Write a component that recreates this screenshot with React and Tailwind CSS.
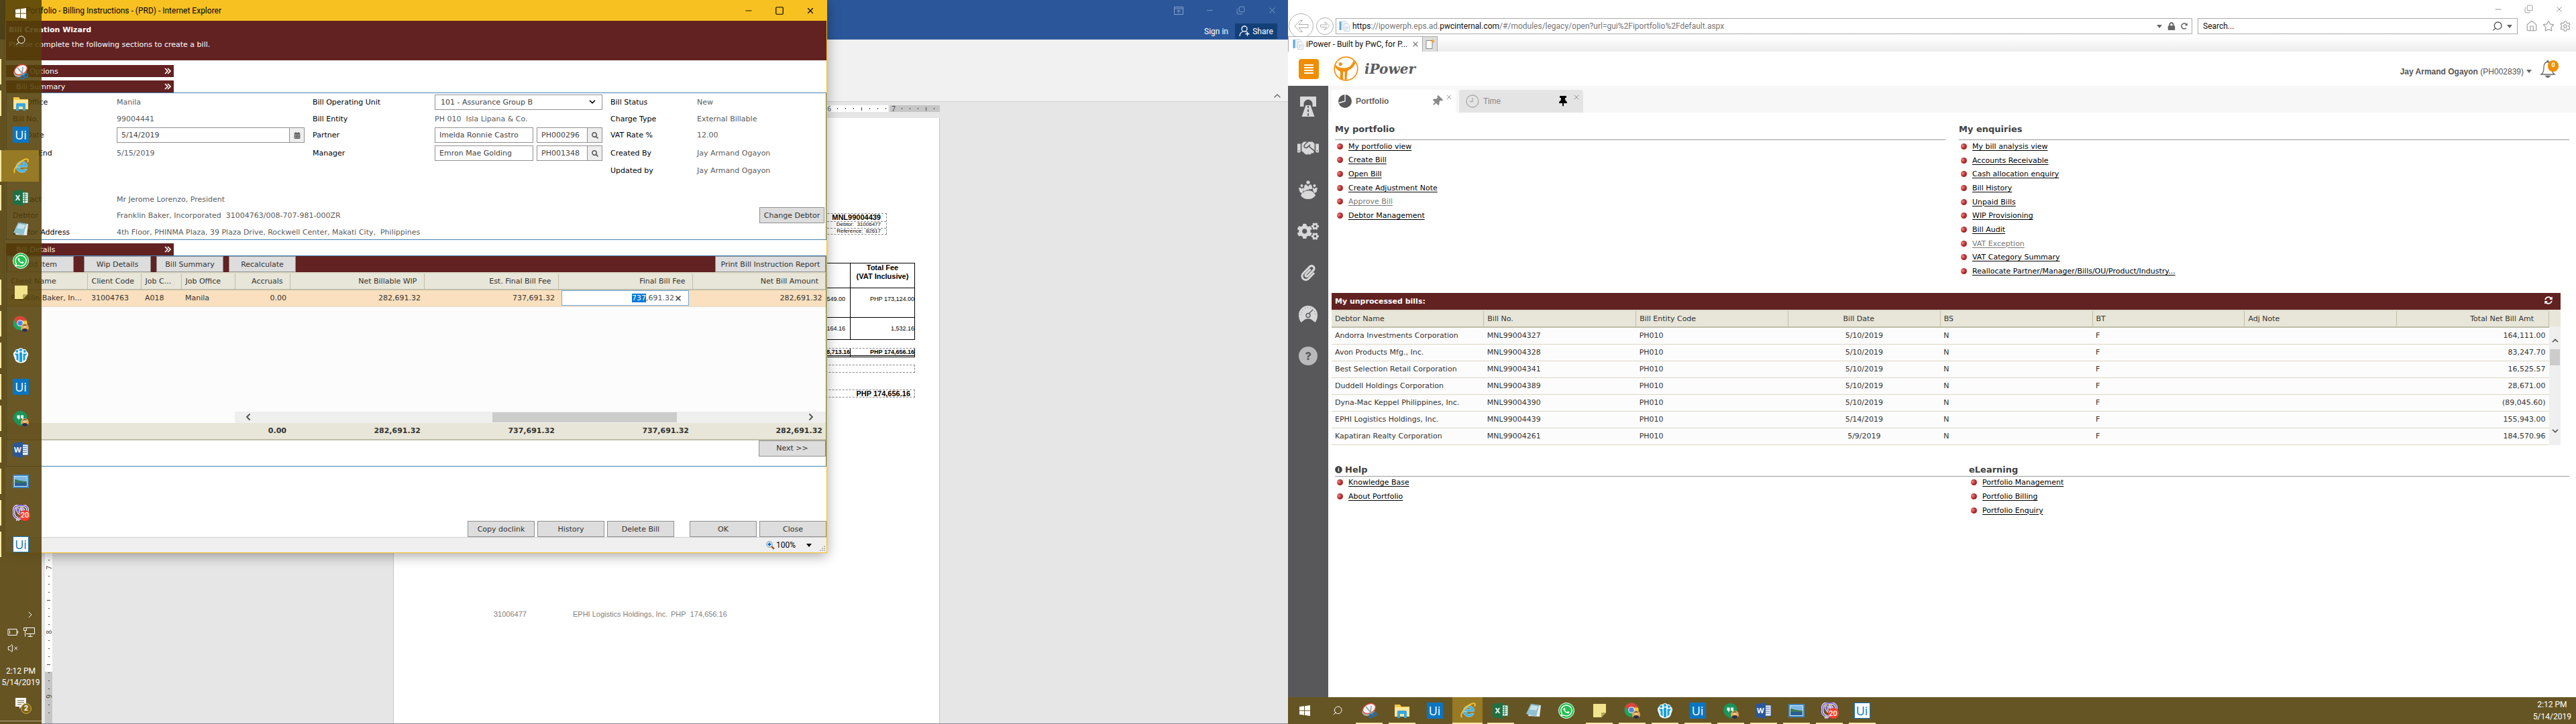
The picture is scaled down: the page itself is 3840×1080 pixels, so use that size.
import React, { useEffect, useRef } from "react";
import {
  FaCalendarAlt, FaCogs, FaHandshake, FaInfoCircle, FaLock, FaPaperclip, FaQuestion,
  FaSearch, FaSyncAlt, FaThumbtack, FaViber, FaWhatsapp, FaRedoAlt,
} from "react-icons/fa";
import {
  ChevronDown, ChevronLeft, ChevronRight, ChevronUp, Home, Search, Settings, Star,
  Minus, Square, Copy, X, VolumeX,
} from "lucide-react";

const SANS = "font-['DejaVu_Sans',Verdana,sans-serif]";
const UI = "font-[Roboto,'Open_Sans',sans-serif]";
const ARIAL = "font-['Liberation_Sans',Arial,sans-serif]";

/* ---------- taskbar icons ---------- */

const Svg = ({ children, className = "size-6" }) => (
  <svg viewBox="0 0 24 24" className={className} aria-hidden="true">{children}</svg>
);

const StartIcon = () => (
  <Svg className="h-4 w-4">
    <path fill="#fff" d="M0 3.4 10.5 2v9.3H0zM12 1.8 24 0v11.3H12zM0 12.7h10.5V22L0 20.6zM12 12.7h12V24l-12-1.8z" />
  </Svg>
);
const SnipIcon = () => (
  <Svg>
    <ellipse cx="11" cy="12" rx="10" ry="7.5" fill="#b9a9a2" transform="rotate(-25 11 12)" />
    <ellipse cx="12" cy="9" rx="10" ry="6.8" fill="#f4f4f4" stroke="#d9463c" strokeWidth="1.4" transform="rotate(-25 12 9)" />
    <path d="m7 6 10 12M15 5l-1 12" stroke="#8f9aa3" strokeWidth="1.6" />
    <circle cx="14.5" cy="20" r="2.4" fill="none" stroke="#1c75bc" strokeWidth="1.8" />
    <circle cx="20" cy="17.5" r="2.4" fill="none" stroke="#1c75bc" strokeWidth="1.8" />
  </Svg>
);
const FolderIcon = () => (
  <Svg>
    <path fill="#f5c84c" d="M1 3h8l2 3h12v15H1z" />
    <path fill="#ffe699" d="M1 7h22v14H1z" />
    <path fill="#3aa7e0" d="M5 13.5c0-1 .8-1.5 1.8-1.5h10.4c1 0 1.8.5 1.8 1.5V23h-4v-6H9v6H5z" />
  </Svg>
);
const UiIcon = ({ light }) => (
  <span className={`flex size-6 items-center justify-center border text-[18px] leading-6 font-['Open_Sans',sans-serif] ${light ? "border-[#0a75c2] bg-white text-[#0a75c2]" : "border-[#0a75c2] bg-[#0a75c2] text-white"}`}>Ui</span>
);
const IeIcon = ({ className }) => (
  <Svg className={className}>
    <path d="M6 13.2h15.5c.4-5-3-8.7-8-8.7-4.8 0-8.3 3.6-8.3 8.3 0 5 3.7 8.4 8.5 8.4 3.6 0 6.4-1.7 7.5-5h-4.6c-.6 1-1.6 1.5-2.9 1.5-2.2 0-3.700-1.500-3.800-4.500zm4-3.200c.3-1.700 1.600-2.700 3.400-2.700s3.100 1 3.300 2.700z" fill="#3fb4ee" stroke="#d9f1fd" strokeWidth=".5" />
    <path d="M3.200 22c-3-2.500 1-10 7-15.300C15.500 2 21.500-.2 22.600 2c.6 1.200.3 2.500-.4 4" fill="none" stroke="#f7c12f" strokeWidth="1.9" />
  </Svg>
);
const OfficeIcon = ({ letter, sheet }) => (
  <Svg>
    <path fill="#fff" stroke={sheet ? "#1e7145" : "#2b579a"} d="M13 4h10v16H13z" />
    <path d="M14 7h7.5M14 10h7.5M14 13h7.5M14 16h7.5" stroke={sheet ? "#1e7145" : "#2b579a"} strokeWidth="1.2" />
    {sheet && <path d="M18 5v14" stroke="#1e7145" />}
    <path fill={sheet ? "#1e7145" : "#2b579a"} d="M0 2.5 15 0v24L0 21.5z" />
    <text x="7.3" y="16" fontSize="11" fontWeight="700" fill="#fff" textAnchor="middle" fontFamily="Open Sans, sans-serif">{letter}</text>
  </Svg>
);
const NotepadIcon = () => (
  <Svg>
    <path fill="#e9eef0" d="m9 2 14 2-2 17-17-1z" />
    <path fill="#8fc3cf" d="m8 2 12.5 2L16 21 1 17z" />
    <path fill="#c4e4ea" d="m9 4 10 1.5-3 6-10-1z" />
    <path d="m8 2 13 2" stroke="#5d7f89" strokeWidth="1.5" strokeDasharray="1 1" />
  </Svg>
);
const StickyIcon = () => (
  <Svg>
    <path fill="#f2e48c" d="M3 2h19v13l-7 7H3z" />
    <path fill="#b5a75e" d="M22 15h-7v7z" />
  </Svg>
);
const Avatar = () => (
  <g>
    <circle cx="18" cy="18" r="6" fill="#e7a64b" />
    <circle cx="18" cy="16" r="2.6" fill="#e9c4a4" />
    <path d="M15.400 15.500c0-3 5.200-3 5.200 0-1-1.200-4-1.200-5.200 0z" fill="#2b211c" />
    <path d="M13.500 22c.5-4 8.500-4 9 0a6 6 0 0 1-9 0z" fill="#28304e" />
  </g>
);
const ChromeIcon = () => (
  <Svg>
    <circle cx="11" cy="11" r="10.5" fill="#1fa463" />
    <path d="M2 5.500A10.500 10.500 0 0 1 21 8H11l-4.500 5z" fill="#d9453a" />
    <path d="M11 7.500h10a10.500 10.500 0 0 1-9 14l4-9z" fill="#fbc633" />
    <circle cx="11" cy="11" r="4.8" fill="#fff" />
    <circle cx="11" cy="11" r="3.8" fill="#4a86e8" />
    <Avatar />
  </Svg>
);
const PeopleIcon = () => (
  <Svg>
    <path d="M12 1c2 0 3 1 3.500 2 2.500-1 5 .5 5 3 2 1 3 3 2.500 5.500L20 20c-2 2-4 3.500-8 3.500S6 22 4 20L1 11.500C.500 9 1.500 7 3.500 6c0-2.500 2.500-4 5-3C9 2 10 1 12 1z" fill="#f3fbff" />
    <g fill="#16a0dc">
      <circle cx="12" cy="4.2" r="2.1" /><circle cx="6.3" cy="6" r="1.9" /><circle cx="17.7" cy="6" r="1.9" />
      <path d="M10 7.500h4V22h-4zM2.500 9.500H8.500V20.500L5.500 18.500V13zM21.500 9.500H15.500V20.500L18.500 18.500V13z" />
    </g>
  </Svg>
);
const HangoutsIcon = () => (
  <Svg>
    <path d="M11 1a10 10 0 1 1 1 20v3c-4-2-11-6-11-13A10 10 0 0 1 11 1z" fill="#17975a" />
    <path d="M6.500 7.500h4v4.500l-2 3v-3h-2zM12 7.500h4v4.500l-2 3v-3h-2z" fill="#fff" />
    <Avatar />
  </Svg>
);
const PhotoIcon = () => (
  <Svg>
    <path fill="#3b87c8" d="M0 2h24v20H0z" />
    <path fill="#cfe8f8" d="M2 4h20v16H2z" />
    <path fill="#7db9e4" d="M3 5h18v7H3z" />
    <path fill="#3d7a5a" d="M3 9c6 1 10 3 18 3v2H3z" />
    <path fill="#2a5f94" d="M3 14h18v5H3z" />
  </Svg>
);
const ViberIcon = () => (
  <span className="relative block size-6">
    <FaViber className="size-6 stroke-white stroke-[40px] text-[#7d5be0] [paint-order:stroke]" />
    <span className={`absolute top-2 left-2.5 flex size-4 items-center justify-center rounded-full bg-[#ff3b30] text-[11px] leading-none font-medium text-white ${UI}`}>20</span>
  </span>
);

const APPS = [
  { name: "Snipping Tool", icon: <SnipIcon />, open: true },
  { name: "File Explorer", icon: <FolderIcon />, open: true },
  { name: "UiPath", icon: <UiIcon /> },
  { name: "Internet Explorer", icon: <IeIcon className="size-6" />, active: true },
  { name: "Excel", icon: <OfficeIcon letter="X" sheet />, open: true },
  { name: "Notepad", icon: <NotepadIcon /> },
  { name: "WhatsApp", icon: <span className="flex size-6 items-center justify-center rounded-full border border-white bg-[#25c04f]"><FaWhatsapp className="size-5 text-white" /></span> },
  { name: "Sticky Notes", icon: <StickyIcon />, open: true },
  { name: "Chrome", icon: <ChromeIcon />, open: true },
  { name: "People", icon: <PeopleIcon />, open: true },
  { name: "UiPath Studio", icon: <UiIcon />, open: true },
  { name: "Hangouts", icon: <HangoutsIcon />, open: true },
  { name: "Word", icon: <OfficeIcon letter="W" />, open: true },
  { name: "Photos", icon: <PhotoIcon />, open: true },
  { name: "Viber", icon: <ViberIcon />, open: true },
  { name: "UiPath Robot", icon: <UiIcon light />, open: true },
];

function SideTaskbar() {
  return (
    <nav aria-label="Taskbar" className={`absolute inset-y-0 left-0 z-20 flex w-[62px] flex-col bg-[#544008]/88 text-white ${UI}`}>
      <button aria-label="Start" className="flex h-10 items-center justify-center"><StartIcon /></button>
      <button aria-label="Search" className="mb-[3px] flex h-10 items-center justify-center"><Search className="size-4 -scale-x-100" strokeWidth={1.5} /></button>
      {APPS.map((a) => (
        <button key={a.name} aria-label={a.name} className={`flex h-[47px] items-center border-r-4 border-transparent ${a.active ? "bg-[#967a25] bg-clip-padding" : ""}`}>
          <span className={`w-0.5 ${a.active ? "h-full bg-[#fce8a8]" : a.open ? "h-[38px] bg-[#fce8a8]" : ""}`} />
          <span className="flex flex-1 justify-center pl-0.5">{a.icon}</span>
        </button>
      ))}
      <div className="mt-auto flex flex-col items-center pb-1">
        <button aria-label="Show hidden icons" className="mb-2.5 ml-7"><ChevronRight className="size-4" strokeWidth={1.5} /></button>
        <div className="flex gap-2">
          <svg viewBox="0 0 16 12" className="h-4 w-4" fill="none" stroke="#fff" aria-label="Battery"><path d="M1 1.500h13v9H1zM15.500 4v4M3.500 3.500v5" /></svg>
          <svg viewBox="0 0 17 16" className="h-4 w-[17px]" fill="none" stroke="#fff" aria-label="Network"><path d="M4 1.500h12.500v9H4M10 11v3.500M6.500 14.500h7M.5 1.500h4v4h-4zM2.500 5.500v9" /></svg>
        </div>
        <VolumeX className="mt-2 mr-6 size-4" strokeWidth={1.5} aria-label="Muted" />
        <div className="mt-[18px] text-center text-xs leading-[17px]">2:12 PM<br />5/14/2019</div>
        <button aria-label="Notifications" className="relative mt-3.5 mb-[18px]">
          <svg viewBox="0 0 16 16" className="size-4"><path fill="#fff" d="M0 0h16v13H9l-3 3v-3H0z" /><path d="M3 4h10M3 7h10M3 10h6" stroke="#665524" /></svg>
          <span className="absolute top-2 left-2 flex size-4 items-center justify-center rounded-full border border-[#c4b070] bg-[#85660c] text-[11px] font-bold">2</span>
        </button>
        <div className="h-px w-full bg-[#b3a888]" />
      </div>
    </nav>
  );
}

function BottomTaskbar() {
  return (
    <nav aria-label="Taskbar" className={`flex h-10 bg-[#665524] pr-[7px] text-white ${UI}`}>
      <button aria-label="Start" className="flex w-[49px] items-center justify-center"><StartIcon /></button>
      <button aria-label="Search" className="flex w-[49px] items-center justify-center"><Search className="size-4 -scale-x-100" strokeWidth={1.5} /></button>
      {APPS.map((a) => (
        <button key={a.name} aria-label={a.name} className={`flex w-[49px] flex-col items-center border-r-4 border-transparent ${a.active ? "bg-[#967a25] bg-clip-padding" : ""}`}>
          <span className="flex flex-1 items-center pt-0.5">{a.icon}</span>
          <span className={`h-0.5 ${a.active ? "w-full bg-[#fce8a8]" : a.open ? "w-10 bg-[#fce8a8]" : ""}`} />
        </button>
      ))}
      <div className="ml-auto pt-0.5 text-center text-xs leading-[18px]">2:12 PM<br />5/14/2019</div>
    </nav>
  );
}

/* ---------- Word ---------- */

function Marks({ count, vertical }) {
  return Array.from({ length: count }, (_, k) => {
    const i = k + 1;
    return (
      <span key={i} className={`flex shrink-0 items-center justify-center text-[10px] leading-none ${vertical ? "h-3 w-full" : "h-full w-3"}`}>
        {i % 8 === 0 ? <span className={vertical ? "-rotate-90" : ""}>{i / 8}</span>
          : i % 8 === 4 ? <span className={`bg-[#444] ${vertical ? "h-px w-[5px]" : "h-[5px] w-px"}`} />
          : <span className={`bg-[#444] ${vertical ? "h-px w-0.5" : "h-0.5 w-px"}`} />}
      </span>
    );
  });
}

function WordDocument() {
  const dash = "border-dashed border-[#888]";
  return (
    <article className={`flex flex-1 flex-col border-x border-[#c6c6c6] bg-white pr-9 text-black ${ARIAL}`}>
      <div className={`mt-[142px] mr-[42px] ml-auto w-[300px] border text-right leading-none ${dash}`}>
        <div className={`h-3 border-b pr-2 text-[11px] font-bold ${dash}`}>MNL99004439</div>
        <div className={`h-[10px] border-b pr-2 text-[8px] ${dash}`}>Debtor:&nbsp; 31006477</div>
        <div className="h-2 pr-2 text-[8px]">Reference:&nbsp; 82617</div>
      </div>
      <table className="mt-[42px] ml-auto w-[600px] table-fixed border-collapse text-right text-[9px] leading-3 [&_td]:border [&_td]:border-black [&_th]:border [&_th]:border-black">
        <colgroup><col /><col className="w-24" /></colgroup>
        <thead>
          <tr className="h-[37px] align-top text-[11px] leading-[13px]"><th /><th className="text-center">Total Fee<br />(VAT Inclusive)</th></tr>
        </thead>
        <tbody>
          <tr className="h-11 align-middle"><td className="pt-0 pr-[7px] pb-3">18,549.00</td><td className="pb-3">PHP 173,124.00</td></tr>
          <tr className="h-[33px]"><td className="pr-[7px]">164.16</td><td>1,532.16</td></tr>
        </tbody>
      </table>
      <div className="mt-3 ml-auto flex w-[600px] justify-end border-t border-dashed border-t-[#888] text-right text-[9px] leading-[10px] font-bold">
        <div className="flex-1 border-r border-b-[3px] border-double border-black">18,713.16</div>
        <div className="w-24 border-r border-b-[3px] border-double border-black">PHP 174,656.16</div>
      </div>
      <div className={`mt-[11px] ml-auto h-3 w-[600px] border ${dash}`} />
      <div className={`mt-[25px] ml-auto h-3 w-[600px] border pr-1.5 text-right text-[11px] leading-[11px] font-bold ${dash}`}>PHP 174,656.16</div>
      <footer className="mt-[315px] flex pl-[149px] text-[11px] leading-4 text-[#7f7f7f]">
        <span className="w-[118px]">31006477</span>
        <span className="w-[146px]">EPHI Logistics Holdings, Inc.</span>
        <span>PHP&nbsp; 174,656.16</span>
      </footer>
    </article>
  );
}

function WordWindow() {
  return (
    <section aria-label="Word" className="flex flex-1 flex-col border-b border-[#8a8a96] bg-[#e6e6e6]">
      <header className={`flex h-[59px] flex-col items-end bg-[#2b579a] text-xs text-white ${UI}`}>
        <div className="flex h-[31px] items-center gap-[33px] pr-4 text-[#88a3cb]">
          <button aria-label="Ribbon display options"><svg viewBox="0 0 14 12" className="h-3 w-3.5" fill="none" stroke="currentColor"><path d="M.5.5h13v11H.5zM.5 3h13M7 10V5M4.500 7.200 7 5l2.500 2.200" /></svg></button>
          <button aria-label="Minimize"><Minus className="size-[13px]" strokeWidth={1.5} /></button>
          <button aria-label="Restore"><Copy className="size-[13px] -scale-y-100" strokeWidth={1.5} /></button>
          <button aria-label="Close"><X className="size-[15px]" strokeWidth={1.5} /></button>
        </div>
        <div className="flex items-center gap-2.5 pt-1 pr-4">
          <button>Sign in</button>
          <button className="flex h-[23px] w-[63px] items-center justify-center gap-1 bg-[#124078]">
            <svg viewBox="0 0 16 17" className="h-[17px] w-4" fill="none" stroke="#fff" strokeWidth="1.3"><circle cx="8" cy="5" r="4" /><path d="M1 16c0-4 2-6 5-7M10 9l1.500 1M12.500 9.500v6M9.500 12.500h6" /></svg>
            Share
          </button>
        </div>
      </header>
      <div className="flex h-[93px] items-end justify-end border-b border-[#d2d2d2] bg-[#f1f1f1] pr-2">
        <button aria-label="Collapse ribbon"><ChevronUp className="size-4 text-[#666]" /></button>
      </div>
      <div className="flex flex-1 pl-[67px]">
        <div className="flex w-[11px] flex-col bg-[linear-gradient(to_top,#c6c6c6_77px,#fff_77px)] pt-[29px] text-[#444]"><Marks count={74} vertical /></div>
        <div className="ml-[508px] flex w-[815px] flex-col">
          <div className="mt-[5px] mb-[9px] flex h-2.5 bg-[linear-gradient(to_left,#c6c6c6_75px,#e6e6e6_75px,#e6e6e6_77px,#fff_77px)] pl-20 text-[#444]"><Marks count={61} /></div>
          <WordDocument />
        </div>
      </div>
    </section>
  );
}

/* ---------- Billing window ---------- */

const Btn = ({ children, className = "w-[100px]" }) => (
  <button className={`h-6 border border-[#909090] bg-[#ddd] text-[11px] leading-none text-[#333] ${className}`}>{children}</button>
);

const SectionBar = ({ children, className = "" }) => (
  <button className={`flex h-[18px] w-[250px] items-center justify-between bg-[#612221] pr-1 pl-[15px] text-[11px] text-white ${className}`}>
    {children}
    <svg viewBox="0 0 10 10" className="size-2.5" fill="none" stroke="#fff" strokeWidth="1.6" aria-hidden="true"><path d="m1 1 4 4-4 4M5 1l4 4-4 4" /></svg>
  </button>
);

function Lookup({ name, code, label }) {
  return (
    <span className="flex w-[250px] gap-[5px]">
      <input aria-label={`${label} name`} defaultValue={name} className="h-[23px] w-[147px] border border-[#909090] bg-white px-1.5 text-[#444]" />
      <span className="flex h-[23px] flex-1 border border-[#909090]">
        <input aria-label={`${label} code`} defaultValue={code} className="w-0 flex-1 bg-white px-1.5 text-[#444]" />
        <button aria-label={`Find ${label}`} className="flex w-[22px] items-center justify-center border-l border-[#909090] bg-[#eee]"><FaSearch className="size-2.5 text-[#555]" /></button>
      </span>
    </span>
  );
}

const GRID_COLS = ["w-[120px]", "w-20", "w-[60px]", "w-20", "w-[82px]", "w-[200px]", "w-[200px]", "w-[200px]", ""];
const GRID_HEAD = ["Client Name", "Client Code", "Job C...", "Job Office", "Accruals", "Net Billable WIP", "Est. Final Bill Fee", "Final Bill Fee", "Net Bill Amount"];

function BillTable() {
  const fee = useRef(null);
  useEffect(() => {
    fee.current.focus();
    fee.current.setSelectionRange(0, 3);
  }, []);
  return (
    <div className="flex flex-col bg-[#fcfcfc] text-[#333]">
      <table className="w-full table-fixed border-collapse text-left text-[11px] leading-none">
        <colgroup>{GRID_COLS.map((c, i) => <col key={i} className={c} />)}</colgroup>
        <thead>
          <tr className="h-[25px] border-t-2 border-b-2 border-t-[#dedbc9] border-b-[#c0bda9] bg-[#e8e6d8]">
            {GRID_HEAD.map((h, i) => <th key={h} className={`border-r border-[#c0bda9] font-normal whitespace-nowrap ${i > 3 ? "pr-2.5 text-right" : "pl-1.5"}`}>{h}</th>)}
          </tr>
        </thead>
        <tbody>
          <tr className="h-[25px] border-b border-[#dedbd0] bg-[#fae0be]">
            <td className="pl-1.5 whitespace-nowrap">Franklin Baker, In...</td>
            <td className="pl-1.5">31004763</td>
            <td className="pl-1.5">A018</td>
            <td className="pl-1.5">Manila</td>
            <td className="pr-[5px] text-right">0.00</td>
            <td className="pr-[5px] text-right">282,691.32</td>
            <td className="pr-[5px] text-right">737,691.32</td>
            <td className="px-[5px]">
              <span className="flex h-[23px] items-center border border-[#6aa9e0] bg-white pr-[9px]">
                <input ref={fee} aria-label="Final Bill Fee" defaultValue="737,691.32" className="w-0 flex-1 text-right text-[#555] outline-none selection:bg-[#0078d7] selection:text-white" />
                <button aria-label="Clear"><X className="size-3 text-[#333]" strokeWidth={3} /></button>
              </span>
            </td>
            <td className="pr-[5px] text-right">282,691.32</td>
          </tr>
        </tbody>
      </table>
      <div className="mt-[156px] ml-[340px] flex h-[17px] items-center bg-[#efefef]">
        <button aria-label="Scroll left" className="px-3"><ChevronLeft className="size-4 text-[#555]" strokeWidth={3} /></button>
        <div className="mr-[192px] ml-auto h-[15px] w-[275px] bg-[#ccc]" />
        <button aria-label="Scroll right" className="pr-3.5"><ChevronRight className="size-4 text-[#555]" strokeWidth={3} /></button>
      </div>
      <table className="w-full table-fixed border-collapse text-right text-[11px] leading-none">
        <colgroup>{GRID_COLS.map((c, i) => <col key={i} className={c} />)}</colgroup>
        <tbody>
          <tr className="h-[25px] border-b-2 border-[#c0bda9] bg-[#e8e6d8] font-bold">
            <td /><td /><td /><td />
            {["0.00", "282,691.32", "737,691.32", "737,691.32", "282,691.32"].map((v, i) => <td key={i} className="pr-[5px]">{v}</td>)}
          </tr>
        </tbody>
      </table>
    </div>
  );
}

function BillingWindow() {
  const v = "text-[#5c5c5c]";
  return (
    <section aria-label="Billing Instructions" className={`absolute top-0 right-[687px] left-2 z-10 flex flex-col border-r border-b border-[#f8c122] bg-white pl-px text-[11px] leading-none text-black shadow-[0_4px_18px_rgba(0,0,0,0.35)] ${SANS}`}>
      <header className={`-ml-px flex h-[31px] items-center bg-[#f8c122] pl-2 text-xs ${UI}`}>
        <IeIcon className="mr-1.5 size-4" />
        <h1>Portfolio - Billing Instructions - (PRD) - Internet Explorer</h1>
        <div className="ml-auto flex gap-8 pr-[17px]">
          <button aria-label="Minimize"><Minus className="size-3.5" strokeWidth={1.5} /></button>
          <button aria-label="Maximize"><Square className="size-3.5" strokeWidth={2} /></button>
          <button aria-label="Close"><X className="size-3.5" strokeWidth={2} /></button>
        </div>
      </header>
      <div className="h-[59px] bg-[#612221] pt-2 pl-1 text-white">
        <h2 className="leading-3 font-bold">Bill Creation Wizard</h2>
        <p className="mt-2.5 leading-3">Please complete the following sections to create a bill.</p>
      </div>
      <SectionBar className="mt-[7px]">Bill Options</SectionBar>
      <SectionBar className="mt-[5px]">Bill Summary</SectionBar>

      <div className="flex h-[220px] flex-col border border-[#4682b4] pt-0.5">
        <div className="grid grid-cols-[155px_292px_182px_262px_129px_1fr] grid-rows-[23px_26px_23px_31px_20px] items-center pl-[9px]">
          <span>Bill Office</span><span className={v}>Manila</span>
          <label htmlFor="ou">Bill Operating Unit</label>
          <span className="relative flex w-[250px]">
            <select id="ou" className="h-[23px] w-full appearance-none border border-[#909090] bg-white pl-2 text-[#444]"><option>101 - Assurance Group B</option></select>
            <ChevronDown className="pointer-events-none absolute top-1 right-2 size-3.5 text-black" strokeWidth={3} />
          </span>
          <span>Bill Status</span><span className={v}>New</span>

          <span>Bill No.</span><span className={v}>99004441</span>
          <span>Bill Entity</span><span className={v}>PH 010&nbsp; Isla Lipana &amp; Co.</span>
          <span>Charge Type</span><span className={v}>External Billable</span>

          <label htmlFor="date">Bill Date</label>
          <span className="flex h-[23px] w-[280px] border border-[#909090]">
            <input id="date" defaultValue="5/14/2019" className="flex-1 bg-white px-1.5 text-[#444]" />
            <button aria-label="Pick a date" className="flex w-[22px] items-center justify-center border-l border-[#909090] bg-[#eee]"><FaCalendarAlt className="size-2.5 text-[#555]" /></button>
          </span>
          <span>Partner</span><Lookup label="Partner" name="Imelda Ronnie Castro" code="PH000296" />
          <span>VAT Rate %</span><span className={v}>12.00</span>

          <span>Period End</span><span className={v}>5/15/2019</span>
          <span>Manager</span><Lookup label="Manager" name="Emron Mae Golding" code="PH001348" />
          <span>Created By</span><span className={v}>Jay Armand Ogayon</span>

          <span /><span /><span /><span />
          <span>Updated by</span><span className={v}>Jay Armand Ogayon</span>
        </div>
        <div className="mt-[22px] grid grid-cols-[155px_1fr_auto] grid-rows-[22px_26px_24px] items-center pr-0.5 pl-[9px]">
          <span>Contact</span><span className={`col-span-2 ${v}`}>Mr Jerome Lorenzo, President</span>
          <span>Debtor</span><span className={v}>Franklin Baker, Incorporated&nbsp; 31004763/008-707-981-000ZR</span><Btn className="w-[97px]">Change Debtor</Btn>
          <span>Debtor Address</span><span className={`col-span-2 ${v}`}>4th Floor, PHINMA Plaza, 39 Plaza Drive, Rockwell Center, Makati City,&nbsp; Philippines</span>
        </div>
      </div>

      <SectionBar className="mt-[5px]">Bill Details</SectionBar>
      <div className="flex h-[315px] flex-col border border-[#4682b4]">
        <div className="flex h-6 gap-2 bg-[#612221]">
          <Btn className="mr-[7px] w-[100px]">Add Item</Btn><Btn>Wip Details</Btn><Btn>Bill Summary</Btn><Btn>Recalculate</Btn>
          <Btn className="ml-auto w-[165px] whitespace-nowrap">Print Bill Instruction Report</Btn>
        </div>
        <BillTable />
        <div className="flex justify-end"><Btn>Next &gt;&gt;</Btn></div>
      </div>

      <div className="mt-[81px] flex justify-end gap-1">
        <Btn>Copy doclink</Btn><Btn>History</Btn><Btn>Delete Bill</Btn><Btn className="ml-[19px] w-[100px]">OK</Btn><Btn>Close</Btn>
      </div>
      <footer className={`flex h-[23px] items-center justify-end border-t border-[#d0d0d0] bg-[#efefef] text-xs ${UI}`}>
        <svg viewBox="0 0 13 13" className="mr-0.5 size-[13px]" aria-hidden="true"><path d="m8 8 4 4" stroke="#9c6234" strokeWidth="2.5" /><circle cx="5" cy="5" r="4.4" fill="#d8ecfb" stroke="#7d9bb5" /><path d="M5 2.500v5M2.500 5h5" stroke="#1769c4" strokeWidth="2" /></svg>
        <button className="flex items-center gap-4">100%<span className="size-0 border-x-4 border-t-[5px] border-x-transparent border-t-black" /></button>
        <svg viewBox="0 0 9 9" className="mt-2.5 mr-px ml-3 size-[9px]" fill="#bbb" aria-hidden="true"><path d="M6 0h2v2H6zM3 3h2v2H3zM6 3h2v2H6zM0 6h2v2H0zM3 6h2v2H3zM6 6h2v2H6z" /></svg>
      </footer>
    </section>
  );
}

/* ---------- iPower browser ---------- */

const PageIcon = () => (
  <svg viewBox="0 0 16 16" className="size-4" aria-hidden="true"><path fill="#eef5fb" stroke="#c3d0dc" strokeWidth=".7" d="M4.500.5h6l2 2v10h-8z" /><path fill="#f7fafd" stroke="#b3bfcb" strokeWidth=".7" d="M7.500 4.500h5l3 2.500v8.500h-8z" /><path fill="#5fa8dc" d="M.5 1h3v13h-3z" /><path d="M9 9h5M9 11h5M9 13h3" stroke="#a8bccd" strokeWidth=".7" /></svg>
);

const Caret = ({ className = "" }) => <span className={`inline-block size-0 border-x-4 border-t-[5px] border-x-transparent border-t-[#666] ${className}`} />;

function BrowserChrome() {
  const round = "flex items-center justify-center rounded-full border border-[#b0b0b0]";
  return (
    <header className={`text-xs text-[#111] ${UI}`}>
      <div className="flex h-[27px] items-center justify-end gap-8 pr-[18px] text-[#888]">
        <button aria-label="Minimize"><Minus className="size-3.5" strokeWidth={1.5} /></button>
        <button aria-label="Restore"><Copy className="size-[13px] -scale-y-100" strokeWidth={1.5} /></button>
        <button aria-label="Close"><X className="size-3.5" strokeWidth={1.5} /></button>
      </div>
      <div className="flex h-[27px] items-start">
        <div className="-mt-[7px] flex w-[71px] items-center gap-1 pl-px">
          <button aria-label="Back" className={`size-[37px] ${round}`}><svg viewBox="0 0 24 20" className="w-6" fill="none" stroke="#aaa"><path d="M2 10 10 1.500h3.500L8 7.500h14v5H8l5.500 6H10z" /></svg></button>
          <button aria-label="Forward" className={`size-[26px] ${round}`}><svg viewBox="0 0 24 20" className="w-4 rotate-180" fill="none" stroke="#aaa" strokeWidth="1.4"><path d="M2 10 10 1.500h3.500L8 7.500h14v5H8l5.500 6H10z" /></svg></button>
        </div>
        <div className="relative flex h-6 flex-1 items-center gap-1 border border-[#aaa] bg-white px-1 whitespace-pre">
          <PageIcon />
          <span className="flex-1 text-[#777]"><span className="text-[#111]">https</span>://ipowerph.eps.ad.<span className="text-[#111]">pwcinternal.com</span>/#/modules/legacy/open?url=gui%2Fiportfolio%2Fdefault.aspx</span>
          <span className="flex items-center gap-2 pr-0.5 text-[#666]"><Caret /><FaLock className="size-3" /><button aria-label="Refresh"><FaRedoAlt className="size-2.5" /></button></span>
        </div>
        <div className="ml-2 flex h-6 w-[477px] items-center gap-1.5 border border-[#aaa] bg-white px-[7px]">
          <input aria-label="Search" placeholder="Search..." className="flex-1 placeholder:text-[#111]" />
          <Search className="size-4 -scale-x-100 text-[#555]" /><Caret />
        </div>
        <div className="flex h-6 w-[87px] items-center gap-[7px] pl-3 text-[#999]"><Home className="size-[18px]" strokeWidth={1.5} /><Star className="size-[18px]" strokeWidth={1.5} /><Settings className="size-[18px]" strokeWidth={1.5} /></div>
      </div>
      <div className="relative flex h-[23px] bg-linear-to-b from-white to-[#ececec]">
        <div className="flex w-[200px] items-center gap-1 border-t border-l border-[#aaa] bg-white pl-1.5"><PageIcon /><span className="whitespace-nowrap">iPower - Built by PwC, for P...</span><button aria-label="Close tab" className="ml-auto pr-1"><X className="size-3 text-[#888]" strokeWidth={3} /></button></div>
        <button aria-label="New tab" className="flex w-[23px] items-center justify-center border border-b-0 border-[#aaa] bg-[#ddd]"><svg viewBox="0 0 16 16" className="size-4"><path fill="#fff" stroke="#888" d="M2 2.500h9v12H2z" /><path d="m12 0 1 2.500 2.500 1L13 4.500 12 7l-1-2.500-2.500-1 2.500-1z" fill="#f5a11c" /></svg></button>
      </div>
    </header>
  );
}

function IPowerHeader() {
  return (
    <div className="flex h-[51px] items-center pr-[26px] pl-4">
      <button aria-label="Menu" className="flex size-[30px] flex-col items-center justify-center gap-0.5 rounded-sm bg-[#ee8e00]">
        <span className="h-[2px] w-3.5 bg-white" /><span className="h-[2px] w-3.5 bg-white" /><span className="h-[2px] w-3.5 bg-white" /><span className="h-[2px] w-3.5 bg-white" />
      </button>
      <svg viewBox="0 0 38 38" className="ml-[22px] size-[37px]" aria-hidden="true">
        <circle cx="19" cy="19" r="17.8" fill="#fff" stroke="#f29111" strokeWidth="1.8" />
        <path fill="#f29111" d="M3 13c3 3.500 7.500 5 13.500 5 8 0 12-5.500 14-11.500 1.300 1 2.300 2.300 3 3.700-2.500 6-7 10-11.500 11.300-1.500 2-1.500 9-2 15h-3V23.500h-2.500V36.500c-2 0-3.500-.6-5-1.500.4-5 1.200-9.500.2-12C6.500 21.500 3.500 18.500 2 16.500z" />
        <circle cx="10.500" cy="12" r="3.2" fill="#f29111" stroke="#fff" />
      </svg>
      <span className="ml-[9px] font-['DejaVu_Serif',Georgia,serif] text-[20px] font-bold text-[#5c5c5e] italic">iPower</span>
      <button className={`mt-2 ml-auto flex items-center gap-1 text-xs text-[#555] ${ARIAL}`}><span><b>Jay Armand Ogayon</b> (PH002839)</span><Caret /></button>
      <button aria-label="Notifications" className="relative ml-3 flex w-7">
        <svg viewBox="0 0 24 26" className="h-[26px] w-6" fill="none" stroke="#666" strokeWidth="1.3"><path d="M12 2.500c5 0 6 4 6 8.500 0 6 1 7.500 4 10H2c3-2.500 4-4 4-10 0-4.500 1-8.500 6-8.500z" /><path d="M9 23.500h6l-3 2.500z" fill="#666" /><circle cx="12" cy="1.5" r="1" /></svg>
        <span className={`absolute top-0 right-0 flex h-[17px] w-4 items-center justify-center rounded-full bg-[#ee8e00] text-[9px] font-bold text-white ${UI}`}>0</span>
      </button>
    </div>
  );
}

const TunnelIcon = () => (
  <svg viewBox="0 0 24 30" className="h-[30px] w-6" fill="#d8d8d8"><path d="M0 0h24v15h-5.500V11a6.500 6.500 0 0 0-13 0v4H0z" /><path d="M8.500 13h7L21.500 30h-19z" /><path d="M12 14v3M12 19v4M12 25v4" stroke="#58585b" strokeWidth="1.8" /></svg>
);
const TeamIcon = () => (
  <svg viewBox="0 0 28 28" className="size-7" fill="#d8d8d8"><circle cx="14" cy="3" r="2.6" /><circle cx="4.5" cy="8" r="2" /><circle cx="23.5" cy="8" r="2" /><path d="M9 6.500h3l2 3 2-3h3l1.500 6-3 1-2-1.200v2h-4L8 17l-1-3zM0 11h3l1.500 2L6 11h1v5l-2 3.500-3.500-2zM28 11h-3l-1.500 2L22 11h-1v4l2.500 4 3-1.500z" /><path d="M3 22c2-4 5-4 8-6.500h5c4 0 6.500 2.500 9 6.500-2 4-6 6-11 6S5 26 3 22z" /></svg>
);
const GaugeIcon = () => (
  <svg viewBox="0 0 28 26" className="h-[26px] w-7"><path fill="#d8d8d8" d="M14 0a14 14 0 0 1 14 14c0 4.500-1.500 8.500-3.500 11l-5-4c-3-2-8-2-11 0l-5 4C1.500 22.500 0 18.500 0 14A14 14 0 0 1 14 0z" /><circle cx="14" cy="14.5" r="3" fill="none" stroke="#58585b" strokeWidth="1.3" /><path d="m15 12 6-6" stroke="#58585b" strokeWidth="1.5" /><path d="M3 14a11 11 0 0 1 22 0" fill="none" stroke="#58585b" strokeDasharray="1 3" /></svg>
);

function SideNav() {
  const items = [
    ["Home", <TunnelIcon />], ["Clients", <FaHandshake className="size-8 text-[#d8d8d8]" />], ["Team", <TeamIcon />],
    ["Settings", <FaCogs className="size-8 text-[#d8d8d8]" />], ["Attachments", <FaPaperclip className="size-6 text-[#d8d8d8]" />],
    ["Dashboard", <GaugeIcon />], ["Help", <span className="flex size-7 items-center justify-center rounded-full bg-[#b9b9bb]"><FaQuestion className="size-3 text-[#58585b]" /></span>],
  ];
  return (
    <nav aria-label="Modules" className="flex w-[60px] shrink-0 flex-col bg-[#58585b]">
      {items.map(([n, ic]) => <a key={n} href="#" aria-label={n} className="flex h-[62px] items-center justify-center">{ic}</a>)}
    </nav>
  );
}

function ModuleTabs() {
  return (
    <div role="tablist" className={`flex items-end gap-[5px] bg-[#f7f7f7] pt-1.5 pl-[5px] text-xs ${ARIAL}`}>
      <div className="flex h-[34px] w-[185px] items-center rounded-t bg-white pr-1 pl-2.5">
        <svg viewBox="0 0 20 20" className="size-5" aria-hidden="true"><circle cx="10" cy="10" r="10" fill="#58585b" /><path d="M10 0v10L1 12.500" fill="none" stroke="#fff" strokeWidth="1.3" /></svg>
        <button role="tab" aria-selected="true" className="ml-1.5 flex-1 text-left font-bold text-[#666]">Portfolio</button>
        <button aria-label="Unpin"><FaThumbtack className="size-4 rotate-45 text-[#8a8a8a]" /></button>
        <button aria-label="Close Portfolio" className="mb-3 ml-1"><X className="size-3 text-[#999]" strokeWidth={2} /></button>
      </div>
      <div className="flex h-[34px] w-[185px] items-center rounded-t bg-[#e4e4e4] pr-1 pl-2.5">
        <svg viewBox="0 0 20 20" className="size-5" fill="none" stroke="#aaa" strokeWidth="1.3" aria-hidden="true"><circle cx="10" cy="10" r="9" /><path d="M10 5v5.500H6" /></svg>
        <button role="tab" aria-selected="false" className="ml-1.5 flex-1 text-left text-[#888]">Time</button>
        <button aria-label="Pin"><FaThumbtack className="h-5 w-3 text-black" /></button>
        <button aria-label="Close Time" className="mb-3 ml-2"><X className="size-3 text-[#999]" strokeWidth={2} /></button>
      </div>
    </div>
  );
}

function LinkList({ items, className }) {
  return (
    <ul className={`-mt-px grid auto-rows-fr text-[11px] leading-none ${className}`}>
      {items.map((t) => {
        const visited = t === "Approve Bill" || t === "VAT Exception";
        return (
          <li key={t} className="flex items-center gap-2 pl-[3px]">
            <span className="size-[9px] rounded-full bg-radial-[at_30%_40%] from-[#e88] via-[#b52a2a] to-[#7a1414]" />
            <a href="#" className={`underline underline-offset-2 ${visited ? "text-[#777]" : "text-black"}`}>{t}</a>
          </li>
        );
      })}
    </ul>
  );
}

const BILLS = [
  ["Andorra Investments Corporation", "MNL99004327", "5/10/2019", "164,111.00"],
  ["Avon Products Mfg., Inc.", "MNL99004328", "5/10/2019", "83,247.70"],
  ["Best Selection Retail Corporation", "MNL99004341", "5/10/2019", "16,525.57"],
  ["Duddell Holdings Corporation", "MNL99004389", "5/10/2019", "28,671.00"],
  ["Dyna-Mac Keppel Philippines, Inc.", "MNL99004390", "5/10/2019", "(89,045.60)"],
  ["EPHI Logistics Holdings, Inc.", "MNL99004439", "5/14/2019", "155,943.00"],
  ["Kapatiran Realty Corporation", "MNL99004261", "5/9/2019", "184,570.96"],
];
const BILL_HEAD = ["Debtor Name", "Bill No.", "Bill Entity Code", "Bill Date", "BS", "BT", "Adj Note", "Total Net Bill Amt"];

function UnprocessedBills() {
  return (
    <section className="mr-[23px] ml-[5px] text-[11px] leading-none text-[#333]">
      <div className="flex h-[25px] items-center justify-between bg-[#612221] pr-3 pl-[5px] text-white">
        <h2 className="font-bold">My unprocessed bills:</h2>
        <button aria-label="Refresh" className="mb-1"><FaSyncAlt className="size-3" /></button>
      </div>
      <div className="flex bg-[#e8e6d8]">
        <table className="flex-1 table-fixed border-collapse text-left">
          <thead>
            <tr className="h-[25px] border-t-2 border-b-2 border-t-[#dedbc9] border-b-[#c0bda9] bg-[#e8e6d8]">
              {BILL_HEAD.map((h, i) => <th key={h} className={`w-[12.5%] border-r border-[#c0bda9] font-normal ${i === 3 ? "pr-4 text-center" : i === 7 ? "pr-[22px] text-right" : "pl-[5px]"}`}>{h}</th>)}
            </tr>
          </thead>
          <tbody>
            {BILLS.map(([name, no, date, amt]) => (
              <tr key={no} className="h-[25px] border-b border-[#ddd6c4] bg-[#fcfcfc]">
                <td className="pl-[5px]">{name}</td><td className="pl-[5px]">{no}</td><td className="pl-[5px]">PH010</td><td className="text-center">{date}</td>
                <td className="pl-[5px]">N</td><td className="pl-[5px]">F</td><td /><td className="pr-[5px] text-right">{amt}</td>
              </tr>
            ))}
          </tbody>
        </table>
        <div className="mt-[25px] flex w-[17px] flex-col items-center bg-[#efefef] pt-3.5 pb-3.5">
          <button aria-label="Scroll up"><ChevronUp className="size-3.5 text-[#555]" strokeWidth={3} /></button>
          <div className="mt-1.5 h-6 w-[15px] bg-[#ccc]" />
          <button aria-label="Scroll down" className="mt-auto"><ChevronDown className="size-3.5 text-[#555]" strokeWidth={3} /></button>
        </div>
      </div>
    </section>
  );
}

function Browser() {
  const head = "border-b border-[#999] text-[13px] font-bold leading-[18px] text-[#404040]";
  return (
    <main className={`flex flex-col bg-white ${SANS}`}>
      <BrowserChrome />
      <IPowerHeader />
      <div className="flex flex-1">
        <SideNav />
        <div className="flex flex-1 flex-col">
          <ModuleTabs />
          <div className="mr-2.5 ml-2.5 grid h-[269px] grid-cols-2 items-start gap-5 pt-4">
            <section>
              <h2 className={`pb-1.5 ${head}`}>My portfolio</h2>
              <LinkList className="h-[124px]" items={["My portfolio view", "Create Bill", "Open Bill", "Create Adjustment Note", "Approve Bill", "Debtor Management"]} />
            </section>
            <section>
              <h2 className={`pb-1.5 ${head}`}>My enquiries</h2>
              <LinkList className="h-[207px]" items={["My bill analysis view", "Accounts Receivable", "Cash allocation enquiry", "Bill History", "Unpaid Bills", "WIP Provisioning", "Bill Audit", "VAT Exception", "VAT Category Summary", "Reallocate Partner/Manager/Bills/OU/Product/Industry..."]} />
            </section>
          </div>
          <UnprocessedBills />
          <div className="mx-2.5 mt-7 grid grid-cols-[945px_1fr] items-start">
            <section>
              <h2 className={`flex items-center gap-1 ${head}`}><FaInfoCircle className="size-[11px]" />Help</h2>
              <LinkList className="h-[41px]" items={["Knowledge Base", "About Portfolio"]} />
            </section>
            <section>
              <h2 className={head}>eLearning</h2>
              <LinkList className="h-[62px]" items={["Portfolio Management", "Portfolio Billing", "Portfolio Enquiry"]} />
            </section>
          </div>
        </div>
      </div>
      <BottomTaskbar />
    </main>
  );
}

export default function App() {
  return (
    <div className="grid min-h-screen grid-cols-2">
      <div className="relative flex flex-col overflow-hidden">
        <WordWindow />
        <BillingWindow />
        <SideTaskbar />
      </div>
      <Browser />
    </div>
  );
}
